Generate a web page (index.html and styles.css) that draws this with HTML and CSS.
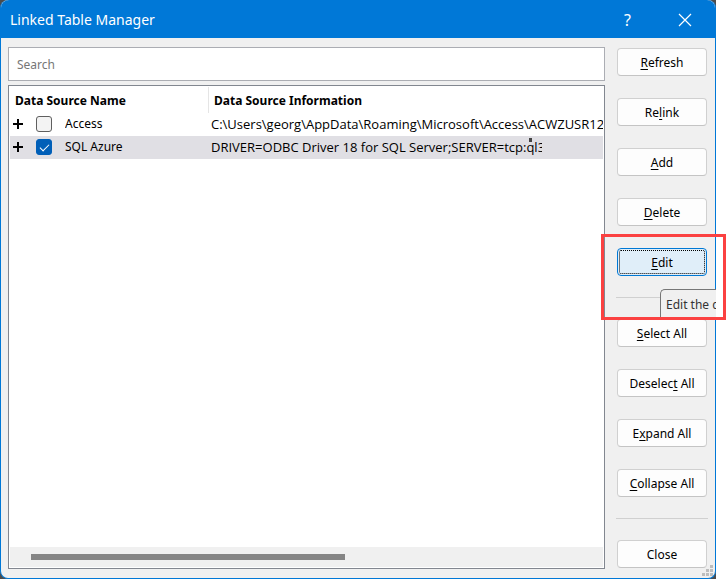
FILE: index.html
```
<!DOCTYPE html>
<html lang="en">
<head>
    <meta charset="UTF-8">
    <meta name="viewport" content="width=device-width, initial-scale=1.0">
    <title>Linked Table Manager</title>
    <link rel="stylesheet" href="styles.css">
</head>
<body>
    <div class="desktop">
        <div class="window">
            <header class="titlebar">
                <h1>Linked Table Manager</h1>
                <button class="title-btn" type="button">?</button>
                <button class="title-btn" type="button" aria-label="Close window">
                    <svg width="14" height="14" viewBox="0 0 14 14"><path d="M1 1L13 13M13 1L1 13" stroke="#fff" stroke-width="1.2" fill="none"/></svg>
                </button>
            </header>

            <main class="content">
                <div class="left">
                    <input class="search" type="text" placeholder="Search" aria-label="Search">

                    <div class="list">
                        <table>
                            <colgroup>
                                <col class="expand-col">
                                <col class="check-col">
                                <col class="name-col">
                                <col>
                            </colgroup>
                            <thead>
                                <tr>
                                    <th class="name-head" colspan="3">Data Source Name</th>
                                    <th>Data Source Information</th>
                                </tr>
                            </thead>
                            <tbody>
                                <tr>
                                    <td class="expand-cell"><button class="expand" type="button" aria-label="Expand Access"></button></td>
                                    <td><input type="checkbox" id="access"></td>
                                    <td><label for="access">Access</label></td>
                                    <td class="info-cell">C:\Users\georg\AppData\Roaming\Microsoft\Access\ACWZUSR12.A</td>
                                </tr>
                                <tr class="selected">
                                    <td class="expand-cell"><button class="expand" type="button" aria-label="Expand SQL Azure"></button></td>
                                    <td><input type="checkbox" id="azure" checked></td>
                                    <td><label for="azure">SQL Azure</label></td>
                                    <td class="info-cell">DRIVER=ODBC Driver 18 for SQL Server;SERVER=tcp:<span class="smudge">ql</span><span class="cut">3</span></td>
                                </tr>
                            </tbody>
                        </table>
                        <div class="scrollbar"><div class="thumb"></div></div>
                    </div>
                </div>

                <div class="actions">
                    <button class="btn" type="button"><u>R</u>efresh</button>
                    <button class="btn" type="button">Re<u>l</u>ink</button>
                    <button class="btn" type="button"><u>A</u>dd</button>
                    <button class="btn" type="button"><u>D</u>elete</button>
                    <div class="edit-wrap">
                        <button class="btn focused" type="button"><u>E</u>dit</button>
                        <div class="tooltip">Edit the c</div>
                        <div class="highlight"></div>
                    </div>
                    <hr>
                    <button class="btn" type="button"><u>S</u>elect All</button>
                    <button class="btn" type="button">Deselec<u>t</u> All</button>
                    <button class="btn" type="button">E<u>x</u>pand All</button>
                    <button class="btn" type="button"><u>C</u>ollapse All</button>
                    <hr>
                    <button class="btn" type="button">Close</button>
                </div>
            </main>

            <svg class="grip" width="11" height="11" viewBox="0 0 11 11" fill="#bdbdbd">
                <path d="M8 0h3v3h-3zM4 4h3v3h-3zM8 4h3v3h-3zM0 8h3v3h-3zM4 8h3v3h-3zM8 8h3v3h-3z"/>
            </svg>
        </div>
    </div>
</body>
</html>
```
FILE: styles.css
```
* {
    box-sizing: border-box;
}

body {
    margin: 0;
    background-color: #fff;
    font-family: "Noto Sans", "Open Sans", sans-serif;
    font-size: 12px;
    line-height: 16px;
    color: #000;
}

button,
input {
    font: inherit;
    color: inherit;
}

.desktop {
    margin-right: 10px;
    background-color: #4c4c4c;
}

.window {
    position: relative;
    display: flex;
    flex-direction: column;
    min-height: 100vh;
    border: 1px solid #0078d7;
    border-top: none;
    border-radius: 8px;
    background-color: #f0f0f0;
}

/* Title bar */
.titlebar {
    display: flex;
    align-items: center;
    height: 38px;
    padding: 1px 2px 0 9px;
    border-radius: 8px 8px 0 0;
    background-color: #0078d7;
    color: #fff;
}

.titlebar h1 {
    flex: 1;
    margin: 0;
    font-size: 14px;
    font-weight: normal;
}

.title-btn {
    display: flex;
    justify-content: center;
    align-items: center;
    width: 57px;
    height: 36px;
    padding: 0;
    border: none;
    background: none;
    font-size: 16px;
}

.content {
    flex: 1;
    display: grid;
    grid-template-columns: 1fr 90px;
    gap: 12px;
    padding: 9px 8px 9px 7px;
}

.left {
    display: flex;
    flex-direction: column;
    gap: 4px;
    min-width: 0;
}

.search {
    width: 100%;
    height: 34px;
    padding: 0 8px;
    border: 1px solid #abadb3;
    border-radius: 0;
    background-color: #fff;
}

.search::placeholder {
    color: #767676;
    opacity: 1;
}

/* Data source list */
.list {
    flex: 1;
    display: flex;
    flex-direction: column;
    justify-content: space-between;
    padding: 1px;
    border: 1px solid #828790;
    background-color: #fff;
}

table {
    width: 100%;
    table-layout: fixed;
    border-spacing: 0;
    white-space: nowrap;
}

th,
td {
    height: 23px;
    padding: 0 0 2px;
    text-align: left;
    overflow: hidden;
}

th {
    height: 26px;
    padding: 2px 0 0 5px;
}

.expand-col {
    width: 26px;
}

.check-col {
    width: 29px;
}

.name-col {
    width: 144px;
}

.name-head {
    border-right: 1px solid #e5e5e5;
}

.info-cell {
    padding-left: 2px;
    font-family: "Open Sans", "Noto Sans", sans-serif;
    font-size: 13px;
}

.expand-cell {
    padding-left: 3px;
}

.selected {
    background-color: #e0dfe4;
}

.expand {
    display: block;
    width: 10px;
    height: 10px;
    padding: 0;
    border: none;
    background:
        linear-gradient(#000, #000) center / 10px 2px no-repeat,
        linear-gradient(#000, #000) center / 2px 10px no-repeat;
}

input[type="checkbox"] {
    appearance: none;
    display: flex;
    justify-content: center;
    width: 16px;
    height: 16px;
    margin: 0;
    border: 1px solid #5f5f5f;
    border-radius: 3px;
    background-color: #f3f3f3;
}

input[type="checkbox"]:checked {
    border-color: #005fb8;
    background-color: #005fb8;
}

input[type="checkbox"]:checked::before {
    content: "";
    width: 8px;
    height: 4px;
    margin-top: 4px;
    border-left: 1px solid #fff;
    border-bottom: 1px solid #fff;
    transform: rotate(-45deg);
}

.smudge {
    position: relative;
}

.smudge::before {
    content: "";
    position: absolute;
    top: 0;
    left: 3px;
    width: 3px;
    height: 4px;
    background-color: #444;
}

.cut {
    display: inline-block;
    width: 4px;
    overflow: hidden;
    vertical-align: top;
}

.scrollbar {
    height: 20px;
    padding: 7px 21px;
    background-color: #f0f0f0;
}

.thumb {
    width: 57%;
    height: 6px;
    background-color: #858585;
}

/* Buttons on the right */
.actions {
    display: flex;
    flex-direction: column;
    gap: 22px;
    padding-top: 1px;
}

.btn {
    width: 100%;
    height: 28px;
    padding: 1px 0 0;
    border: 1px solid #d0d0d0;
    border-bottom-color: #c4c4c4;
    border-radius: 4px;
    background-color: #fdfdfd;
}

.btn u {
    text-underline-offset: 2px;
}

.focused {
    border-color: #0078d4;
    background-color: #e0eef9;
    outline: 1px dotted #000;
    outline-offset: -3px;
}

hr {
    width: 92px;
    height: 1px;
    margin: -1px -1px;
    border: none;
    background-color: #d0d0d0;
}

.edit-wrap {
    position: relative;
}

.tooltip {
    position: absolute;
    top: 41px;
    left: 43px;
    width: 56px;
    height: 30px;
    padding: 7px 0 0 5px;
    border: 1px solid #767676;
    border-right: none;
    border-bottom: none;
    border-radius: 5px 0 0 0;
    background-color: #f0f0f0;
    color: #333;
    white-space: nowrap;
    overflow: hidden;
}

.highlight {
    position: absolute;
    top: -14px;
    left: -16px;
    width: 125px;
    height: 86px;
    border: 3px solid #fb4141;
    pointer-events: none;
}

.grip {
    position: absolute;
    right: 2px;
    bottom: 2px;
}
```
